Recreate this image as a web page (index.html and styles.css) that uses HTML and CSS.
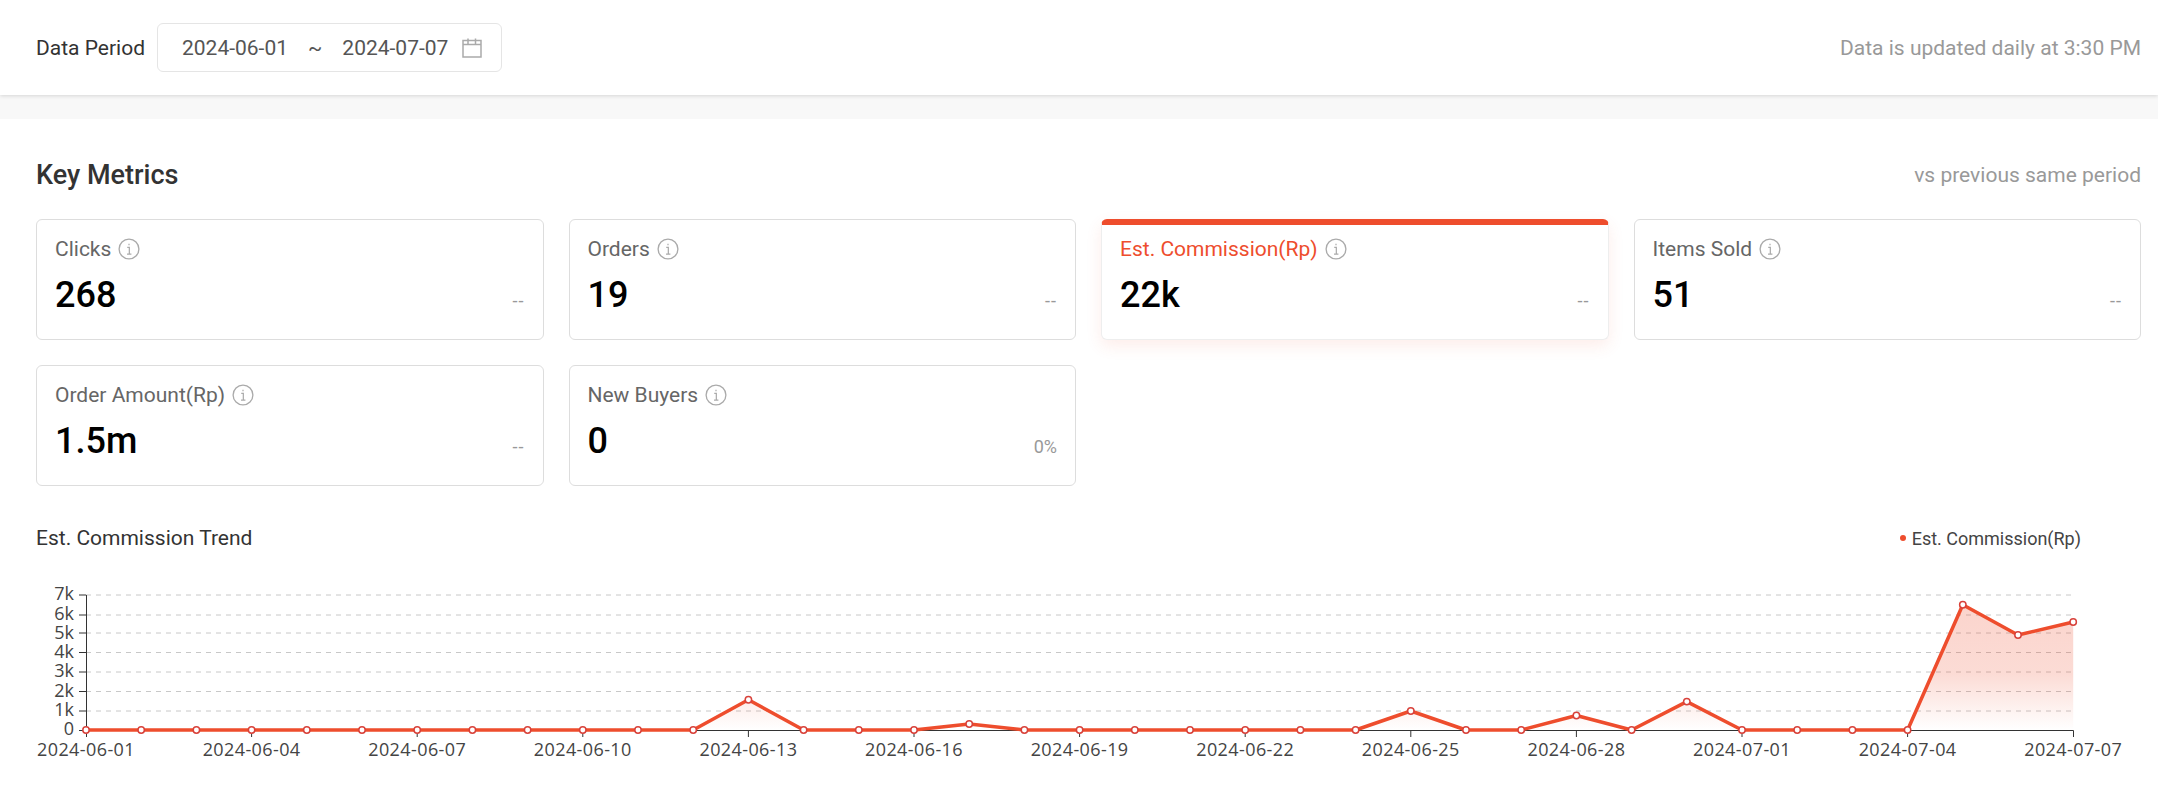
FILE: index.html
```html
<!DOCTYPE html>
<html lang="en">
  <head>
    <meta charset="UTF-8" />
    <meta name="viewport" content="width=device-width, initial-scale=1.0" />
    <title>Key Metrics</title>
    <link rel="stylesheet" href="styles.css">
  </head>
  <body>
    <svg class="icon-defs" aria-hidden="true">
      <symbol id="icon-info" viewBox="0 0 20 20">
        <circle cx="10" cy="10" r="9" fill="none" stroke="currentColor" stroke-width="1.2" />
        <path d="M10 5.2v1.4M8.4 8.6H10.3V14.4M8.2 14.6h4" fill="none" stroke="currentColor" stroke-width="1.1" />
      </symbol>
    </svg>

    <header class="topbar">
      <div class="period">
        <span class="period-label">Data Period</span>
        <div class="date-box">
          <span>2024-06-01</span>
          <span class="tilde">~</span>
          <span>2024-07-07</span>
          <svg class="calendar" viewBox="0 0 20 20">
            <path d="M1 2.5H19V19H1ZM1 6.5H19M6 0.5V6.5M13.5 0.5V6.5" fill="none" stroke="currentColor" stroke-width="1.5" />
          </svg>
        </div>
      </div>
      <span class="updated">Data is updated daily at 3:30 PM</span>
    </header>

    <main class="content">
      <div class="section-head">
        <h2>Key Metrics</h2>
        <span class="compare">vs previous same period</span>
      </div>

      <div class="metrics">
        <div class="metric">
          <div class="metric-name">Clicks <svg class="info"><use href="#icon-info" /></svg></div>
          <div class="metric-row"><span class="metric-value">268</span><span class="metric-change dash">--</span></div>
        </div>
        <div class="metric">
          <div class="metric-name">Orders <svg class="info"><use href="#icon-info" /></svg></div>
          <div class="metric-row"><span class="metric-value">19</span><span class="metric-change dash">--</span></div>
        </div>
        <div class="metric active">
          <div class="metric-name">Est. Commission(Rp) <svg class="info"><use href="#icon-info" /></svg></div>
          <div class="metric-row"><span class="metric-value">22k</span><span class="metric-change dash">--</span></div>
        </div>
        <div class="metric">
          <div class="metric-name">Items Sold <svg class="info"><use href="#icon-info" /></svg></div>
          <div class="metric-row"><span class="metric-value">51</span><span class="metric-change dash">--</span></div>
        </div>
        <div class="metric">
          <div class="metric-name">Order Amount(Rp) <svg class="info"><use href="#icon-info" /></svg></div>
          <div class="metric-row"><span class="metric-value">1.5m</span><span class="metric-change dash">--</span></div>
        </div>
        <div class="metric">
          <div class="metric-name">New Buyers <svg class="info"><use href="#icon-info" /></svg></div>
          <div class="metric-row"><span class="metric-value">0</span><span class="metric-change">0%</span></div>
        </div>
      </div>

      <div class="trend-head">
        <span class="trend-title">Est. Commission Trend</span>
        <span class="legend"><i class="legend-dot"></i>Est. Commission(Rp)</span>
      </div>

      <svg class="chart" viewBox="36 570 2105 200" width="2105" height="200">
        <defs>
          <linearGradient id="area-fill" gradientUnits="userSpaceOnUse" x1="0" y1="604" x2="0" y2="729">
            <stop offset="0" stop-color="#ee4d2d" stop-opacity="0.24" />
            <stop offset="0.55" stop-color="#ee4d2d" stop-opacity="0.2" />
            <stop offset="1" stop-color="#ee4d2d" stop-opacity="0" />
          </linearGradient>
        </defs>

        <g class="grid">
          <line x1="86" x2="2073" y1="594" y2="594" />
          <line x1="86" x2="2073" y1="614" y2="614" />
          <line x1="86" x2="2073" y1="632" y2="632" />
          <line x1="86" x2="2073" y1="651.5" y2="651.5" />
          <line x1="86" x2="2073" y1="671" y2="671" />
          <line x1="86" x2="2073" y1="690.5" y2="690.5" />
          <line x1="86" x2="2073" y1="710" y2="710" />
        </g>

        <g class="axis">
          <path d="M86.5 594V736M79 594H86M79 614H86M79 632H86M79 651.5H86M79 671H86M79 690.5H86M79 710H86M79 729.5H86M86 729.5H2073.5V736M251.6 730V736M417.2 730V736M582.8 730V736M748.4 730V736M914 730V736M1079.6 730V736M1245.2 730V736M1410.8 730V736M1576.4 730V736M1742 730V736M1907.6 730V736" />
        </g>

        <g class="y-labels">
          <text x="74" y="599">7k</text>
          <text x="74" y="619">6k</text>
          <text x="74" y="638">5k</text>
          <text x="74" y="657">4k</text>
          <text x="74" y="676">3k</text>
          <text x="74" y="696">2k</text>
          <text x="74" y="715">1k</text>
          <text x="74" y="734">0</text>
        </g>

        <g class="x-labels">
          <text x="86" y="755">2024-06-01</text>
          <text x="251.6" y="755">2024-06-04</text>
          <text x="417.2" y="755">2024-06-07</text>
          <text x="582.8" y="755">2024-06-10</text>
          <text x="748.4" y="755">2024-06-13</text>
          <text x="914" y="755">2024-06-16</text>
          <text x="1079.6" y="755">2024-06-19</text>
          <text x="1245.2" y="755">2024-06-22</text>
          <text x="1410.8" y="755">2024-06-25</text>
          <text x="1576.4" y="755">2024-06-28</text>
          <text x="1742" y="755">2024-07-01</text>
          <text x="1907.6" y="755">2024-07-04</text>
          <text x="2073.2" y="755">2024-07-07</text>
        </g>

        <path class="area" d="M693.2 729L748.4 698.7L803.6 729L914 729L969.2 723L1024.4 729L1355.6 729L1410.8 710L1466 729L1521.2 729L1576.4 714.5L1631.6 729L1686.8 700.6L1742 729L1907.6 729L1962.8 603.7L2018 634L2073.2 621V729Z" />
        <polyline class="line" points="86,729 693.2,729 748.4,698.7 803.6,729 914,729 969.2,723 1024.4,729 1355.6,729 1410.8,710 1466,729 1521.2,729 1576.4,714.5 1631.6,729 1686.8,700.6 1742,729 1907.6,729 1962.8,603.7 2018,634 2073.2,621" />

        <g class="points">
          <circle cx="86" cy="729" r="3.2" />
          <circle cx="141.2" cy="729" r="3.2" />
          <circle cx="196.4" cy="729" r="3.2" />
          <circle cx="251.6" cy="729" r="3.2" />
          <circle cx="306.8" cy="729" r="3.2" />
          <circle cx="362" cy="729" r="3.2" />
          <circle cx="417.2" cy="729" r="3.2" />
          <circle cx="472.4" cy="729" r="3.2" />
          <circle cx="527.6" cy="729" r="3.2" />
          <circle cx="582.8" cy="729" r="3.2" />
          <circle cx="638" cy="729" r="3.2" />
          <circle cx="693.2" cy="729" r="3.2" />
          <circle cx="748.4" cy="698.7" r="3.2" />
          <circle cx="803.6" cy="729" r="3.2" />
          <circle cx="858.8" cy="729" r="3.2" />
          <circle cx="914" cy="729" r="3.2" />
          <circle cx="969.2" cy="723" r="3.2" />
          <circle cx="1024.4" cy="729" r="3.2" />
          <circle cx="1079.6" cy="729" r="3.2" />
          <circle cx="1134.8" cy="729" r="3.2" />
          <circle cx="1190" cy="729" r="3.2" />
          <circle cx="1245.2" cy="729" r="3.2" />
          <circle cx="1300.4" cy="729" r="3.2" />
          <circle cx="1355.6" cy="729" r="3.2" />
          <circle cx="1410.8" cy="710" r="3.2" />
          <circle cx="1466" cy="729" r="3.2" />
          <circle cx="1521.2" cy="729" r="3.2" />
          <circle cx="1576.4" cy="714.5" r="3.2" />
          <circle cx="1631.6" cy="729" r="3.2" />
          <circle cx="1686.8" cy="700.6" r="3.2" />
          <circle cx="1742" cy="729" r="3.2" />
          <circle cx="1797.2" cy="729" r="3.2" />
          <circle cx="1852.4" cy="729" r="3.2" />
          <circle cx="1907.6" cy="729" r="3.2" />
          <circle cx="1962.8" cy="603.7" r="3.2" />
          <circle cx="2018" cy="634" r="3.2" />
          <circle cx="2073.2" cy="621" r="3.2" />
        </g>
      </svg>
    </main>
  </body>
</html>
```

FILE: styles.css
```css
* {
  box-sizing: border-box;
}

html,
body {
  margin: 0;
  height: 100%;
}

body {
  background-color: #f8f8f8;
  font-family: Roboto, "Liberation Sans", sans-serif;
  color: #333;
  overflow: hidden;
}

.icon-defs {
  display: none;
}

.topbar {
  height: 95px;
  padding: 0 17px 0 36px;
  background-color: #fff;
  box-shadow: 0 1px 4px rgba(0, 0, 0, 0.14);
  display: flex;
  align-items: center;
  justify-content: space-between;
}

.period {
  display: flex;
  align-items: center;
  gap: 12px;
}

.period-label {
  font-size: 21px;
  color: #333;
}

.date-box {
  height: 49px;
  padding: 0 19px 0 24px;
  border: 1px solid #e5e5e5;
  border-radius: 6px;
  display: flex;
  align-items: center;
  font-size: 21px;
  color: #555;
}

.tilde {
  margin: 0 20px;
}

.calendar {
  width: 20px;
  height: 20px;
  margin-left: 14px;
  color: #aaa;
}

.updated,
.compare {
  font-size: 21px;
  color: #999;
}

.content {
  margin-top: 24px;
  height: 680px;
  padding: 0 17px 0 36px;
  background-color: #fff;
}

.section-head {
  height: 100px;
  padding-top: 12px;
  display: flex;
  align-items: center;
  justify-content: space-between;
}

.section-head h2 {
  margin: 0;
  font-size: 27px;
  font-weight: 500;
  color: #333;
}

.metrics {
  display: grid;
  grid-template-columns: repeat(4, 1fr);
  gap: 25px;
}

.metric {
  height: 121px;
  padding: 17px 18px 0;
  border: 1px solid #ddd;
  border-radius: 6px;
  background-color: #fff;
}

.metric.active {
  padding-top: 12px;
  border-color: #eee;
  border-top: 6px solid #ee4d2d;
  box-shadow: 0 6px 16px rgba(238, 77, 45, 0.1);
}

.metric.active .metric-name {
  color: #ee4d2d;
}

.metric-name {
  height: 24px;
  display: flex;
  align-items: center;
  gap: 7px;
  font-size: 21px;
  color: #666;
}

.info {
  width: 22px;
  height: 22px;
  color: #aaa;
}

.metric-row {
  margin-top: 12px;
  display: flex;
  align-items: baseline;
  justify-content: space-between;
}

.metric-value {
  font-size: 36px;
  font-weight: 500;
  line-height: 44px;
  color: #000;
}

.metric-change {
  font-size: 18px;
  color: #999;
}

.metric-change.dash {
  letter-spacing: 1px;
}

.trend-head {
  margin-top: 37px;
  height: 30px;
  padding-right: 60px;
  display: flex;
  align-items: center;
  justify-content: space-between;
}

.trend-title {
  font-size: 21px;
  color: #333;
}

.legend {
  display: flex;
  align-items: center;
  gap: 6px;
  font-size: 18px;
  color: #444;
}

.legend-dot {
  width: 6px;
  height: 6px;
  border-radius: 50%;
  background-color: #ee4d2d;
}

.chart {
  display: block;
  margin-top: 18px;
}

.grid line {
  stroke: #c8c8c8;
  stroke-width: 1;
  stroke-dasharray: 5 5;
}

.axis path {
  fill: none;
  stroke: #333;
  stroke-width: 1;
}

.y-labels text,
.x-labels text {
  font-family: "Open Sans", sans-serif;
  font-size: 18px;
  fill: #444;
}

.y-labels text {
  text-anchor: end;
}

.x-labels text {
  text-anchor: middle;
  letter-spacing: 0.4px;
}

.area {
  fill: url(#area-fill);
}

.line {
  fill: none;
  stroke: #ee4d2d;
  stroke-width: 3.5;
  stroke-linejoin: round;
}

.points circle {
  fill: #fff;
  stroke: #d8413a;
  stroke-width: 1.5;
}
```
